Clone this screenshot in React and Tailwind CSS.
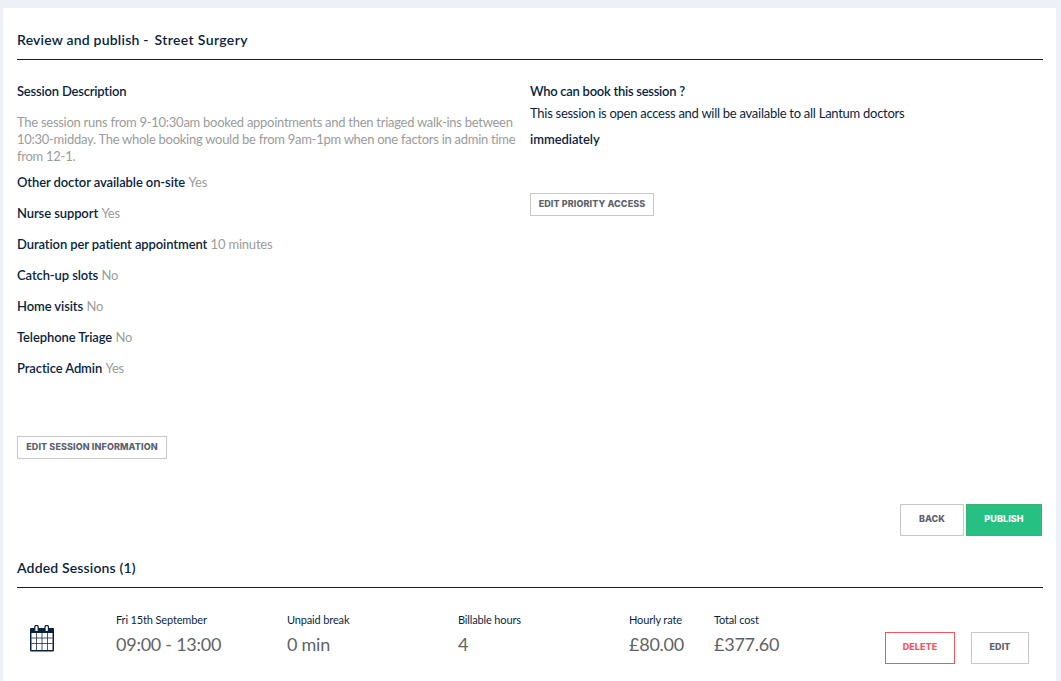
import React from 'react';

const navy = 'text-[#0b1f3f]';

const details = [
  { label: 'Other doctor available on-site', value: 'Yes' },
  { label: 'Nurse support', value: 'Yes' },
  { label: 'Duration per patient appointment', value: '10 minutes' },
  { label: 'Catch-up slots', value: 'No' },
  { label: 'Home visits', value: 'No' },
  { label: 'Telephone Triage', value: 'No' },
  { label: 'Practice Admin', value: 'Yes' },
];

const stats = [
  { label: 'Fri 15th September', value: '09:00 - 13:00', width: 'w-[171px]' },
  { label: 'Unpaid break', value: '0 min', width: 'w-[171px]' },
  { label: 'Billable hours', value: '4', width: 'w-[171px]' },
  { label: 'Hourly rate', value: '£80.00', width: 'w-[85px]' },
  { label: 'Total cost', value: '£377.60', width: 'w-[100px]' },
];

const btnFont = { fontFamily: 'Inter, sans-serif' };

const OutlineButton = ({ children, className }) => (
  <button
    style={btnFont}
    className={`border border-[#c8c8c8] bg-white pb-[2px] text-[9px] font-extrabold tracking-[0.1px] text-[#5b6270] uppercase ${className}`}
  >
    {children}
  </button>
);

const CalendarIcon = () => (
  <svg width="24" height="27" viewBox="0 0 24 27" fill="none">
    <path d="M1 3h22a1 1 0 0 1 1 1V25a1.5 1.5 0 0 1-1.5 1.5h-21A1.5 1.5 0 0 1 0 25V4a1 1 0 0 1 1-1z" fill="#0b1f3f" />
    <rect x="1.5" y="8" width="21" height="17" fill="#fff" />
    <path d="M6.5 8V25M12 8V25M17.5 8V25M1.5 13h21M1.5 18.5h21" stroke="#0b1f3f" strokeWidth="1" opacity="0.75" />
    <path d="M4.8 6V2a1.7 1.7 0 0 1 3.4 0v4M15 6V2a1.7 1.7 0 0 1 3.4 0v4" stroke="#0b1f3f" strokeWidth="1.2" fill="#fff" />
  </svg>
);

export default function App() {
  return (
    <div
      className="min-h-[681px] h-[681px] overflow-hidden bg-[#edf1f7] pt-2 pl-[3px] pr-[5px]"
      style={{ fontFamily: 'Lato, sans-serif' }}
    >
      <div className="h-[673px] bg-white px-[14px]">
        <div className={`h-[52px] border-b border-[#0b1f3f] pt-[22px] -mr-px text-[14px] leading-5 font-semibold tracking-[0.2px] ${navy}`}>
          Review and publish -<span className="ml-[6px] tracking-[0.35px]">Street Surgery</span>
        </div>

        <div className="flex pt-[23px]">
          <div className="w-[513px]">
            <div className={`text-[13px] leading-[17px] font-semibold tracking-[-0.2px] ${navy}`}>Session Description</div>
            <p className="mt-[14px] w-[505px] text-[13px] leading-[17px] tracking-[-0.27px] text-[#9b9b9b]">
              The session runs from 9-10:30am booked appointments and then triaged walk-ins between
              10:30-midday. The whole booking would be from 9am-1pm when one factors in admin time
              from 12-1.
            </p>
            <div className="mt-[9px] flex flex-col gap-[14px]">
              {details.map((row) => (
                <div key={row.label} className="text-[13px] leading-[17px]">
                  <span className={`font-semibold tracking-[-0.1px] ${navy}`}>{row.label}</span>{' '}
                  <span className="tracking-[-0.2px] text-[#9b9b9b]">{row.value}</span>
                </div>
              ))}
            </div>
            <OutlineButton className="mt-[59px] block h-[23px] w-[150px]">Edit session information</OutlineButton>
          </div>

          <div className="flex-1">
            <div className={`text-[13px] leading-[17px] font-semibold tracking-[-0.27px] ${navy}`}>Who can book this session ?</div>
            <p className={`mt-[5px] text-[13px] leading-[17px] tracking-[-0.27px] ${navy}`}>
              This session is open access and will be available to all Lantum doctors
            </p>
            <p className={`mt-[9px] text-[13px] leading-[17px] font-semibold tracking-[-0.05px] ${navy}`}>immediately</p>
            <OutlineButton className="mt-[45px] block h-[23px] w-[124px]">Edit priority access</OutlineButton>
          </div>
        </div>

        <div className="mt-[45px] flex justify-end gap-[2px]">
          <OutlineButton className="h-8 w-16">Back</OutlineButton>
          <button
            style={btnFont}
            className="h-8 w-[76px] border border-[#3cb371] bg-[#27c083] pb-[2px] text-[9px] font-extrabold tracking-[0.1px] text-white uppercase"
          >
            Publish
          </button>
        </div>

        <div className={`mt-[22px] -mr-px h-[30px] border-b border-[#0b1f3f] text-[14px] leading-5 font-semibold tracking-[0.15px] ${navy}`}>
          Added Sessions (1)
        </div>

        <div className="flex pt-[24px]">
          <div className="w-[99px] pt-[13px] pl-[13px]">
            <CalendarIcon />
          </div>
          {stats.map((s) => (
            <div key={s.label} className={s.width}>
              <div className={`text-[11px] leading-[16px] tracking-[-0.15px] ${navy}`}>{s.label}</div>
              <div className="mt-[4px] text-[18px] leading-[24px] tracking-[-0.25px] text-[#5f6368]">{s.value}</div>
            </div>
          ))}
          <div className="ml-[71px] flex gap-4 pt-[20px]">
            <button
              style={btnFont}
              className="h-8 w-[70px] border border-[#f7545f] bg-white pb-[2px] text-[9px] font-extrabold tracking-[0.1px] text-[#f7545f] uppercase"
            >
              Delete
            </button>
            <OutlineButton className="h-8 w-[58px]">Edit</OutlineButton>
          </div>
        </div>
      </div>
    </div>
  );
}
